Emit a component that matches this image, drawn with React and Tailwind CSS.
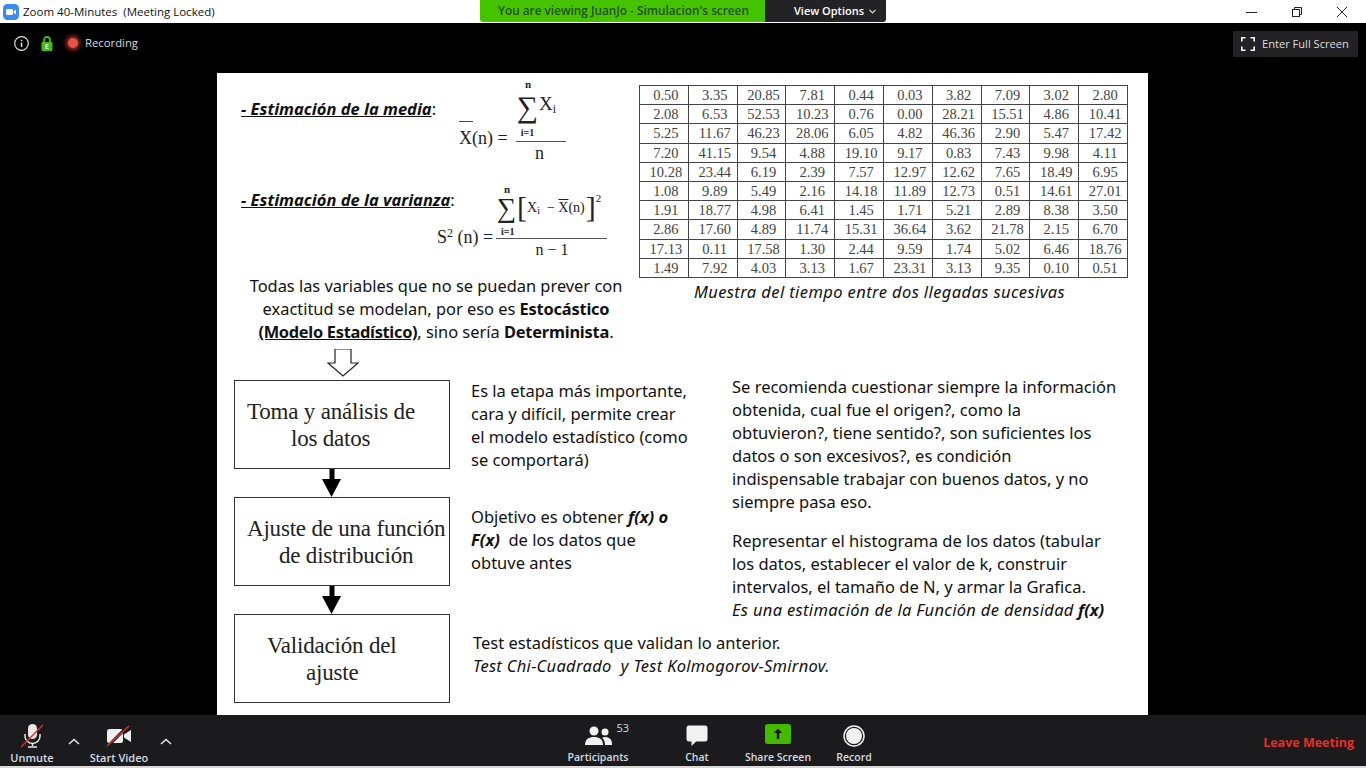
import React from "react";

const rows = [
  ["0.50","3.35","20.85","7.81","0.44","0.03","3.82","7.09","3.02","2.80"],
  ["2.08","6.53","52.53","10.23","0.76","0.00","28.21","15.51","4.86","10.41"],
  ["5.25","11.67","46.23","28.06","6.05","4.82","46.36","2.90","5.47","17.42"],
  ["7.20","41.15","9.54","4.88","19.10","9.17","0.83","7.43","9.98","4.11"],
  ["10.28","23.44","6.19","2.39","7.57","12.97","12.62","7.65","18.49","6.95"],
  ["1.08","9.89","5.49","2.16","14.18","11.89","12.73","0.51","14.61","27.01"],
  ["1.91","18.77","4.98","6.41","1.45","1.71","5.21","2.89","8.38","3.50"],
  ["2.86","17.60","4.89","11.74","15.31","36.64","3.62","21.78","2.15","6.70"],
  ["17.13","0.11","17.58","1.30","2.44","9.59","1.74","5.02","6.46","18.76"],
  ["1.49","7.92","4.03","3.13","1.67","23.31","3.13","9.35","0.10","0.51"],
];

const serif = "font-['Liberation_Serif',serif]";
const sans = "font-['Noto_Sans',sans-serif]";
const ui = "font-['Open_Sans',sans-serif]";

function Box({ children, className = "" }) {
  return (
    <div className={`w-[216px] h-[89px] shrink-0 border border-[#333] flex flex-col justify-center text-[23px] leading-[27px] text-[#222] tracking-[-0.2px] ${serif} ${className}`}>
      {children}
    </div>
  );
}

function DownArrow() {
  return (
    <svg width="216" height="28" viewBox="0 0 216 28" className="shrink-0 block">
      <rect x="95.500" y="0" width="5" height="12" fill="#000" />
      <polygon points="88,10 107,10 97.500,28" fill="#000" />
    </svg>
  );
}

function Caret() {
  return (
    <svg width="12" height="7" viewBox="0 0 12 7" fill="none" stroke="#e8e8e8" strokeWidth="1.500">
      <path d="M1 6 L6 1.500 L11 6" />
    </svg>
  );
}

function ToolItem({ w, icon, label, extra = "", size = "text-[11px]" }) {
  return (
    <div className={`flex flex-col items-center justify-end h-full shrink-0 pb-[1px] ${extra}`} style={{ width: w }}>
      <div className="h-[28px] flex items-center justify-center relative">{icon}</div>
      <div className={`${size} leading-[15px] font-semibold text-[#d4dbe3] whitespace-nowrap ${ui}`}>{label}</div>
    </div>
  );
}

export default function App() {
  return (
    <div className="w-[1366px] h-[768px] overflow-hidden flex flex-col bg-black relative">
      {/* window title bar */}
      <div className="h-[23px] bg-white shrink-0 flex items-center">
        <svg width="16" height="16" viewBox="0 0 16 16" className="ml-[3px] mr-[4px]">
          <rect width="16" height="16" rx="4.500" fill="#3d8bf2" />
          <rect x="3" y="5" width="7" height="6" rx="1.500" fill="#fff" />
          <path d="M10.500 7.500 L13 5.500 V10.500 L10.500 8.500Z" fill="#fff" />
        </svg>
        <div className={`text-[11.500px] text-[#111] whitespace-pre ${ui}`}>Zoom 40-Minutes  (Meeting Locked)</div>
        <div className="ml-auto flex items-center h-full">
          <svg width="12" height="12" viewBox="0 0 12 12" className="mr-[33px]"><path d="M0 6.500H11" stroke="#222" /></svg>
          <svg width="12" height="12" viewBox="0 0 12 12" fill="none" stroke="#222" className="mr-[33px]">
            <rect x="1.500" y="3.500" width="7" height="7" /><path d="M3.500 3.500V1.500H10.500V8.500H8.500" />
          </svg>
          <svg width="12" height="12" viewBox="0 0 12 12" fill="none" stroke="#222" className="mr-[18px]"><path d="M1 1L11 11M11 1L1 11" /></svg>
        </div>
      </div>

      {/* viewing banner */}
      <div className={`absolute left-[480px] top-0 w-[406px] h-[22px] flex rounded-b-[3px] overflow-hidden text-[11.800px] ${ui}`}>
        <div className="w-[285px] bg-[#45c300] text-[#26501f] font-semibold flex items-center pl-[18px] whitespace-nowrap">You are viewing JuanJo - Simulacion's screen</div>
        <div className="flex-1 bg-[#232326] text-white font-semibold flex items-center pl-[29px] gap-[5px] whitespace-nowrap text-[11px]">
          View Options
          <svg width="7" height="5" viewBox="0 0 7 5" fill="none" stroke="#ddd" strokeWidth="1.200"><path d="M0.500 0.800 L3.500 3.800 L6.500 0.800" /></svg>
        </div>
      </div>

      {/* stage */}
      <div className="h-[692px] shrink-0 flex flex-col">
        <div className="h-[50px] shrink-0 flex items-start">
          <div className="flex items-center h-[40px] pl-[14px]">
            <svg width="15" height="15" viewBox="0 0 15 15" className="mr-[12px]">
              <circle cx="7.500" cy="7.500" r="6.800" fill="none" stroke="#ddd" strokeWidth="1.200" />
              <rect x="6.800" y="6.500" width="1.500" height="4.500" fill="#ddd" />
              <rect x="6.800" y="3.800" width="1.500" height="1.500" fill="#ddd" />
            </svg>
            <svg width="12" height="15" viewBox="0 0 12 15" className="mr-[15px]">
              <path d="M3 6.500V4a3 3 0 0 1 6 0V6.500" fill="none" stroke="#3fbf0f" strokeWidth="1.800" />
              <rect x="0.500" y="6" width="11" height="9" rx="1" fill="#3fbf0f" />
              <path d="M4.500 8H7.500V9H5.500V10H7.200V11H5.500V12H7.500V13H4.500Z" fill="#fff" />
            </svg>
            <div className="w-[10px] h-[10px] rounded-full bg-[#e8504a] shadow-[0_0_5px_2px_rgba(225,70,60,0.75)] mr-[7px]" />
            <div className={`text-[11.300px] text-[#d8d8d8] ${ui}`}>Recording</div>
          </div>
          <div className="ml-auto mr-[8px] mt-[8px] w-[125px] h-[26px] bg-[#222225] flex items-center pl-[8px] gap-[7px]">
            <svg width="14" height="14" viewBox="0 0 14 14" fill="none" stroke="#fff" strokeWidth="1.600">
              <path d="M0.800 4.500V0.800H4.500M9.500 0.800H13.200V4.500M13.200 9.500V13.200H9.500M4.500 13.200H0.800V9.500" />
            </svg>
            <div className={`text-[11.100px] text-[#dcdcdc] whitespace-nowrap ${ui}`}>Enter Full Screen</div>
          </div>
        </div>

        {/* slide */}
        <div className={`ml-[217px] w-[931px] h-[642px] bg-white flex flex-col text-[#111] ${sans}`}>
          <div className="flex h-[276px] shrink-0">
            {/* left column */}
            <div className="w-[422px] shrink-0 flex flex-col">
              <div className="flex h-[94px] shrink-0">
                <div className="w-[242px] pl-[24px] pt-[25px] text-[16.500px] leading-[22px] shrink-0 whitespace-nowrap">
                  <span className="font-bold italic underline">- Estimación de la media</span>:
                </div>
                <div className={`relative flex flex-col items-center w-[50px] ml-[57px] mt-[5px] text-[#222] ${serif}`}>
                  <div className="text-[11px] leading-[12px] font-bold h-[12px] pr-[26px]">n</div>
                  <div className="flex items-center h-[34px] w-full whitespace-nowrap">
                    <span className="text-[30px] leading-[34px] w-[23px] text-center">∑</span>
                    <span className="text-[19px] leading-[22px] mt-[-2px]">X<span className="text-[12px] align-[-3px]">i</span></span>
                  </div>
                  <div className="text-[10px] leading-[17px] font-bold h-[17px] pr-[27px]">i=1</div>
                  <div className="w-[50px] border-t border-[#555]" />
                  <div className="text-[18px] leading-[22px] pr-[3px]">n</div>
                  <div className="absolute left-[-57px] top-[43px] w-[14px] h-px bg-[#444]" />
                  <div className="absolute left-[-57px] top-[49px] text-[18px] leading-[22px] whitespace-nowrap">X(n) =</div>
                </div>
              </div>
              <div className="flex h-[87px] shrink-0">
                <div className="w-[242px] pl-[24px] pt-[22px] text-[16.500px] leading-[22px] shrink-0 whitespace-nowrap">
                  <span className="font-bold italic underline">- Estimación de la varianza</span>:
                </div>
                <div className={`relative flex flex-col items-start w-[111px] ml-[37px] mt-[16px] text-[#222] ${serif}`}>
                  <div className="text-[11px] leading-[12px] font-bold h-[10px] pl-[8px]">n</div>
                  <div className="flex items-center h-[30px] whitespace-nowrap">
                    <span className="text-[27px] leading-[30px] w-[21px] text-center">∑</span>
                    <span className="text-[30px] leading-[30px] font-light mt-[-3px] w-[9px]">[</span>
                    <span className="text-[14px] leading-[20px] ml-[1px] mt-[2px]">X<span className="text-[10px] align-[-2px]">i</span>&nbsp;&nbsp;− <span className="overline">X</span>(n)</span>
                    <span className="text-[30px] leading-[30px] font-light mt-[-3px] ml-[1px]">]</span>
                    <span className="text-[11px] mt-[-20px]">2</span>
                  </div>
                  <div className="text-[10px] leading-[18px] font-bold h-[15px] pl-[5px]">i=1</div>
                  <div className="w-[111px] border-t border-[#555]" />
                  <div className="w-full text-center text-[16px] leading-[22px] pl-[1px]">n − 1</div>
                  <div className="absolute left-[-59px] top-[39px] text-[18px] leading-[22px] whitespace-nowrap">
                    S<span className="text-[12px] align-[6px]">2</span> (n) =
                  </div>
                </div>
              </div>
              <div className="w-[400px] ml-[19px] text-center text-[16.400px] leading-[23px] mt-[20px]">
                Todas las variables que no se puedan prever con exactitud se modelan, por eso es <b className="tracking-[-0.2px]">Estocástico</b> <b className="underline tracking-[-0.3px]">(Modelo Estadístico)</b>, sino sería <b className="tracking-[-0.2px]">Determinista</b>.
              </div>
            </div>
            {/* table */}
            <div className="pt-[12px] flex flex-col items-start">
              <table className={`w-[489px] h-[193px] border-collapse table-fixed text-[14.500px] text-[#444] ${serif}`}>
                <tbody>
                  {rows.map((r, i) => (
                    <tr key={i}>
                      {r.map((c, j) => (
                        <td key={j} className="border border-[#444] text-center p-0 pl-[4px] leading-[18px]">{c}</td>
                      ))}
                    </tr>
                  ))}
                </tbody>
              </table>
              <div className="w-[481px] text-center italic text-[16.500px] tracking-[0.4px] leading-[22px] mt-[3px] whitespace-nowrap">Muestra del tiempo entre dos llegadas sucesivas</div>
            </div>
          </div>

          {/* lower part */}
          <div className="flex flex-1 min-h-0">
            <div className="w-[232px] pl-[17px] shrink-0 flex flex-col">
              <div className="h-[31px] shrink-0 w-[216px] flex justify-center pl-[2px]">
                <svg width="32" height="29" viewBox="0 0 32 29" fill="none" stroke="#222" strokeWidth="1.200">
                  <path d="M8 0 H24 V14 H31 L16 27 L1 14 H8 Z" />
                </svg>
              </div>
              <Box>
                <div className="pl-[12px]">Toma y análisis de</div>
                <div className="pl-[56px]">los datos</div>
              </Box>
              <DownArrow />
              <Box>
                <div className="pl-[12px] whitespace-nowrap">Ajuste de una función</div>
                <div className="pl-[44px]">de distribución</div>
              </Box>
              <DownArrow />
              <Box>
                <div className="pl-[32px]">Validación del</div>
                <div className="pl-[71px]">ajuste</div>
              </Box>
            </div>
            <div className="flex flex-col pl-[22px] flex-1 min-w-0 text-[16.500px] leading-[23px]">
              <div className="flex h-[273px] shrink-0">
                <div className="w-[261px] shrink-0 flex flex-col">
                  <div className="pt-[30px] h-[156px] w-[220px]">Es la etapa más importante, cara y difícil, permite crear el modelo estadístico (como se comportará)</div>
                  <div className="w-[215px]">Objetivo es obtener <b className="italic">f(x) o F(x)</b>&nbsp; de los datos que obtuve antes</div>
                </div>
                <div className="flex-1 pt-[26px]">
                  <div className="w-[388px]">Se recomienda cuestionar siempre la información obtenida, cual fue el origen?, como la obtuvieron?, tiene sentido?, son suficientes los datos o son excesivos?, es condición indispensable trabajar con buenos datos, y no siempre pasa eso.</div>
                  <div className="w-[388px] mt-[16px]">Representar el histograma de los datos (tabular los datos, establecer el valor de k, construir intervalos, el tamaño de N, y armar la Grafica.<br /><span className="whitespace-nowrap"><i className="tracking-[0.33px]">Es una estimación de la Función de densidad</i> <b className="italic">f(x)</b></span></div>
                </div>
              </div>
              <div className="pl-[2px] pt-[9px]">
                Test estadísticos que validan lo anterior.<br /><i className="tracking-[0.3px]">Test Chi-Cuadrado&nbsp; y Test Kolmogorov-Smirnov.</i>
              </div>
            </div>
          </div>
        </div>
      </div>

      {/* toolbar */}
      <div className="h-[51px] shrink-0 bg-[#1b1b1d] flex items-stretch">
        <ToolItem w={64} label="Unmute" icon={
          <svg width="26" height="26" viewBox="0 0 26 26">
            <rect x="9" y="1" width="9" height="15" rx="4.500" fill="#e8e8e8" />
            <path d="M6 11v2a7.500 7.500 0 0 0 15 0v-2" fill="none" stroke="#e8e8e8" strokeWidth="1.500" />
            <path d="M13.500 20v3M9 24h9" stroke="#e8e8e8" strokeWidth="1.500" />
            <path d="M2 24 L24 2" stroke="#d8312f" strokeWidth="1.500" />
          </svg>
        } />
        <div className="w-[20px] shrink-0 flex items-center justify-center pt-[2px]"><Caret /></div>
        <ToolItem w={70} label="Start Video" icon={
          <svg width="28" height="22" viewBox="0 0 28 22">
            <rect x="2" y="4" width="16" height="14" rx="2.500" fill="#f0f0f0" />
            <path d="M19 9.500 L26 5 V17 L19 12.500Z" fill="#f0f0f0" />
            <path d="M2 22 L24 0" stroke="#1b1b1d" strokeWidth="3" />
            <path d="M2 21 L24 1" stroke="#d8312f" strokeWidth="1.500" />
          </svg>
        } />
        <div className="w-[20px] ml-[2px] shrink-0 flex items-center justify-center pt-[2px]"><Caret /></div>
        <div className="ml-[384px] flex items-stretch">
          <ToolItem w={76} size="text-[10.500px]" label="Participants" icon={
            <>
              <svg width="27" height="20" viewBox="0 0 27 20" fill="#f2f2f2">
                <circle cx="9" cy="5" r="4.500" />
                <path d="M0 19c0-6 4-8 9-8s9 2 9 8z" />
                <circle cx="20" cy="6" r="3.500" />
                <path d="M20 11c4 0 7 2 7 7v1h-7c0-3-1-6-3-7 1-.7 2-1 3-1z" />
              </svg>
              <span className={`absolute left-[32px] top-[-1px] text-[11px] leading-[14px] text-[#d4dbe3] ${ui}`}>53</span>
            </>
          } />
          <ToolItem w={64} extra="ml-[29px]" size="text-[10.500px]" label="Chat" icon={
            <svg width="22" height="22" viewBox="0 0 22 22" fill="#f2f2f2">
              <path d="M3 0.500H19a2.500 2.500 0 0 1 2.500 2.500V14a2.500 2.500 0 0 1-2.500 2.500H10L5.500 21V16.500H3A2.500 2.500 0 0 1 .5 14V3A2.500 2.500 0 0 1 3 .5z" />
            </svg>
          } />
          <ToolItem w={76} extra="ml-[11px]" size="text-[10.500px]" label="Share Screen" icon={
            <svg width="26" height="20" viewBox="0 0 26 20" className="mt-[-4px]">
              <rect width="26" height="20" rx="2.500" fill="#43b900" />
              <path d="M13 4.500 L17 9 H14.200 V15 H11.800 V9 H9Z" fill="#111" />
            </svg>
          } />
          <ToolItem w={56} extra="ml-[10px]" size="text-[10.500px]" label="Record" icon={
            <svg width="22" height="22" viewBox="0 0 22 22">
              <circle cx="11" cy="11" r="10" fill="none" stroke="#f2f2f2" strokeWidth="1.500" />
              <circle cx="11" cy="11" r="8" fill="#f2f2f2" />
            </svg>
          } />
        </div>
        <div className={`ml-auto pr-[12px] flex items-center pt-[5px] text-[12.500px] font-bold text-[#e0302a] whitespace-nowrap ${ui}`}>Leave Meeting</div>
      </div>
      <div className="flex-1 bg-[#d8d8d8]" />
    </div>
  );
}
